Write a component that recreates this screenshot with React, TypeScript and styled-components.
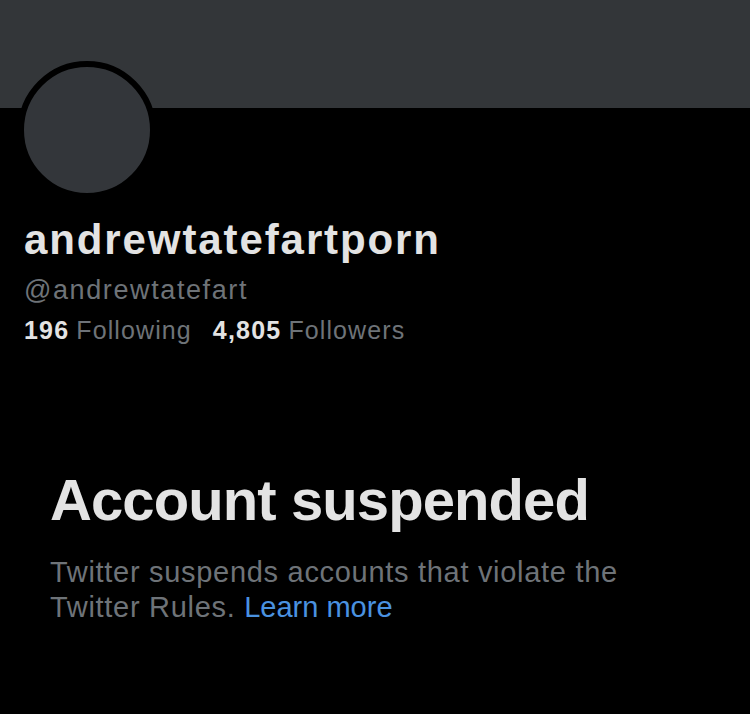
import React from "react";
import styled, { createGlobalStyle } from "styled-components";

const Global = createGlobalStyle`
  html, body {
    margin: 0;
    padding: 0;
    background: #000;
  }
  body {
    font-family: "Liberation Sans", Arial, sans-serif;
    -webkit-font-smoothing: antialiased;
  }
`;

const Page = styled.div`
  width: 750px;
  height: 714px;
  background: #000;
  overflow: hidden;
  display: flex;
  flex-direction: column;
`;

const Banner = styled.div`
  height: 108px;
  background: #333639;
  flex-shrink: 0;
`;

const Avatar = styled.div`
  width: 126px;
  height: 126px;
  border-radius: 50%;
  background: #33363a;
  border: 6px solid #000;
  margin: -47px 0 0 18px;
`;

const Profile = styled.div`
  display: flex;
  flex-direction: column;
  padding-left: 24px;
  margin-top: 17px;
`;

const Name = styled.div`
  font-size: 42px;
  line-height: 48px;
  font-weight: 700;
  color: #e3e3e3;
  letter-spacing: 1.9px;
`;

const Handle = styled.div`
  margin-top: 10px;
  font-size: 27px;
  line-height: 32px;
  color: #6e7378;
  letter-spacing: 1.6px;
`;

const Stats = styled.div`
  margin-top: 9px;
  display: flex;
  gap: 21px;
  font-size: 25px;
  line-height: 30px;
`;

const Stat = styled.span`
  display: flex;
  gap: 7px;
`;

const Count = styled.span`
  color: #e3e3e3;
  font-weight: 700;
  letter-spacing: 1.2px;
`;

const Label = styled.span`
  color: #6e7378;
  letter-spacing: 1.1px;
`;

const Notice = styled.div`
  display: flex;
  flex-direction: column;
  padding-left: 50px;
  margin-top: 122px;
`;

const Heading = styled.h1`
  margin: 0;
  font-size: 58px;
  line-height: 66px;
  font-weight: 700;
  color: #e3e3e3;
  letter-spacing: -0.9px;
`;

const Text = styled.p`
  margin: 22px 0 0;
  font-size: 29px;
  line-height: 35px;
  color: #6e7378;
  letter-spacing: 0.7px;
  width: 630px;
`;

const Link = styled.a`
  color: #4a92e0;
  text-decoration: none;
  letter-spacing: 0;
`;

export default function App() {
  return (
    <Page>
      <Global />
      <Banner />
      <Avatar />
      <Profile>
        <Name>andrewtatefartporn</Name>
        <Handle>@andrewtatefart</Handle>
        <Stats>
          <Stat>
            <Count>196</Count>
            <Label>Following</Label>
          </Stat>
          <Stat>
            <Count>4,805</Count>
            <Label>Followers</Label>
          </Stat>
        </Stats>
      </Profile>
      <Notice>
        <Heading>Account suspended</Heading>
        <Text>
          Twitter suspends accounts that violate the Twitter Rules.{" "}
          <Link href="#">Learn more</Link>
        </Text>
      </Notice>
    </Page>
  );
}
